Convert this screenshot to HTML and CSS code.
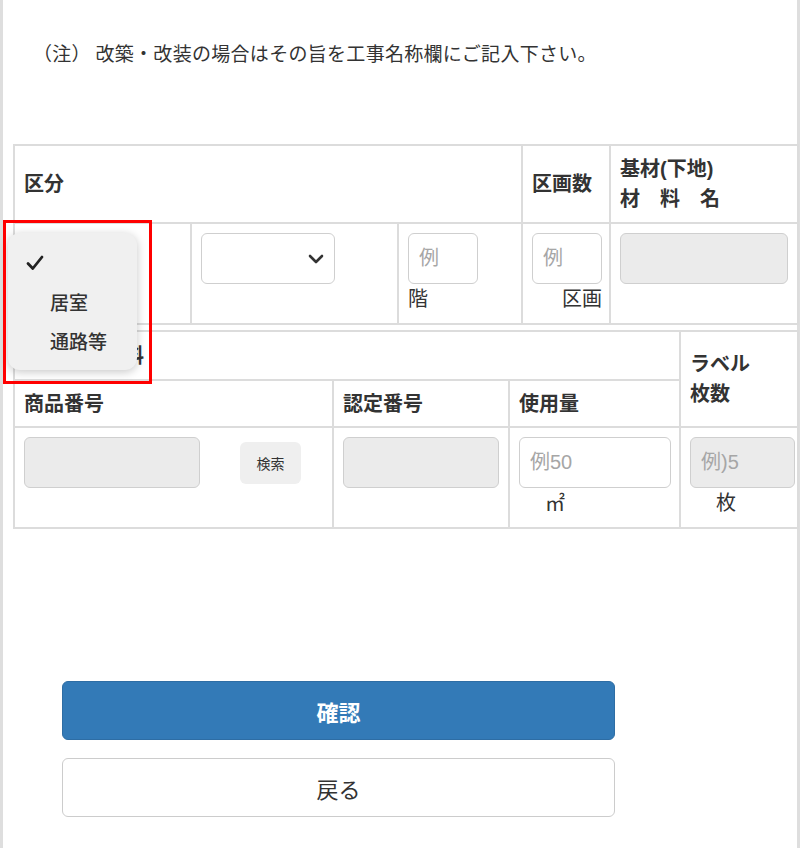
FILE: index.html
```html
<!DOCTYPE html>
<html lang="ja">

<head>
    <meta charset="UTF-8" />
    <meta name="viewport" content="width=device-width, initial-scale=1.0" />
    <title>区分選択</title>
    <link rel="stylesheet" href="styles.css">
</head>

<body>
    <div class="page">
        <p class="note">（注） 改築・改装の場合はその旨を工事名称欄にご記入下さい。</p>

        <!-- 区分 -->
        <table class="form-table first-table">
            <colgroup>
                <col style="width: 177px">
                <col style="width: 207px">
                <col style="width: 124px">
                <col style="width: 88px">
                <col style="width: 188px">
            </colgroup>
            <tr class="row-head">
                <th colspan="3">区分</th>
                <th>区画数</th>
                <th>基材(下地)<br>材　料　名</th>
            </tr>
            <tr class="row-input">
                <td>
                    <div class="select select-a is-focus"></div>
                </td>
                <td>
                    <div class="select select-b">
                        <svg width="16" height="10" viewBox="0 0 16 10">
                            <polyline points="2,2 8,8 14,2" fill="none" stroke="#333" stroke-width="2.6" stroke-linecap="round" stroke-linejoin="round" />
                        </svg>
                    </div>
                </td>
                <td>
                    <input class="field field-xs" type="text" placeholder="例">
                    <div class="unit">階</div>
                </td>
                <td>
                    <input class="field field-xs" type="text" placeholder="例">
                    <div class="unit unit-right">区画</div>
                </td>
                <td>
                    <input class="field field-full is-gray" type="text" readonly>
                </td>
            </tr>
        </table>

        <!-- 材料 -->
        <table class="form-table second-table">
            <colgroup>
                <col style="width: 319px">
                <col style="width: 176px">
                <col style="width: 171px">
                <col style="width: 118px">
            </colgroup>
            <tr class="row-title">
                <th colspan="3">内装仕上材料</th>
                <th rowspan="2">ラベル<br>枚数</th>
            </tr>
            <tr class="row-sub">
                <th>商品番号</th>
                <th>認定番号</th>
                <th>使用量</th>
            </tr>
            <tr class="row-values">
                <td>
                    <div class="search-box">
                        <input class="field field-product is-gray" type="text" readonly>
                        <button class="btn-search" type="button">検索</button>
                    </div>
                </td>
                <td>
                    <input class="field field-full is-gray" type="text" readonly>
                </td>
                <td>
                    <input class="field field-amount" type="text" placeholder="例50">
                    <div class="unit unit-indent unit-cjk">㎡</div>
                </td>
                <td>
                    <input class="field field-label is-gray" type="text" placeholder="例)5" readonly>
                    <div class="unit unit-indent">枚</div>
                </td>
            </tr>
        </table>

        <div class="actions">
            <button class="btn btn-primary" type="button">確認</button>
            <button class="btn btn-default" type="button">戻る</button>
        </div>

        <!-- 開いている選択肢 -->
        <div class="picker">
            <div class="picker-item">
                <span class="picker-check">
                    <svg width="18" height="16" viewBox="0 0 18 16">
                        <polyline points="2,8.5 6.8,13.5 16,2" fill="none" stroke="#222" stroke-width="2.8" stroke-linecap="round" stroke-linejoin="round" />
                    </svg>
                </span>
            </div>
            <div class="picker-item"><span class="picker-check"></span>居室</div>
            <div class="picker-item"><span class="picker-check"></span>通路等</div>
        </div>
        <div class="mark"></div>
    </div>
</body>

</html>
```

FILE: styles.css
```css
* {
    box-sizing: border-box;
}

body {
    margin: 0;
    background: #fff;
    color: #333;
    font-family: "Liberation Sans", "Noto Sans CJK JP", sans-serif;
}

.page {
    position: relative;
    width: 800px;
    height: 848px;
    padding: 38px 0 0 10px;
    border-left: 3px solid #dedede;
    border-right: 3px solid #dedede;
}

.note {
    margin: 0 0 0 20px;
    font-family: "Noto Sans CJK JP", sans-serif;
    font-size: 19px;
    line-height: 30px;
    letter-spacing: 0.3px;
    color: #333;
}

.form-table {
    width: 784px;
    table-layout: fixed;
    border-collapse: collapse;
}

.first-table {
    margin-top: 76px;
}

.second-table {
    margin-top: 5px;
}

.form-table th,
.form-table td {
    border: 2px solid #dcdcdc;
    padding: 9px;
    text-align: left;
    vertical-align: top;
}

.form-table th {
    padding-top: 6px;
    padding-bottom: 6px;
    font-size: 20px;
    font-weight: bold;
    line-height: 30px;
    vertical-align: middle;
    color: #333;
}

.row-head {
    height: 78px;
}

.row-input {
    height: 100px;
}

.row-title {
    height: 49px;
}

.row-sub {
    height: 47px;
}

.row-values {
    height: 100px;
}

.select {
    display: flex;
    align-items: center;
    justify-content: flex-end;
    height: 51px;
    padding-right: 10px;
    border: 1px solid #cfcfcf;
    border-radius: 6px;
    background: #fff;
}

.select-a {
    width: 87px;
}

.select-b {
    width: 134px;
}

.select.is-focus {
    border: 2px solid #6ea6dc;
}

.field {
    display: block;
    height: 51px;
    padding: 0 10px;
    border: 1px solid #cfcfcf;
    border-radius: 6px;
    background: #fff;
    font-family: "Liberation Sans", "Noto Sans CJK JP", sans-serif;
    font-size: 20px;
    color: #333;
    outline: none;
}

.field::placeholder {
    color: #a6a6a6;
}

.field.is-gray {
    background: #ebebeb;
}

.field-xs {
    width: 70px;
}

.field-full {
    width: 100%;
}

.field-product {
    width: 176px;
}

.field-amount {
    width: 152px;
}

.field-label {
    width: 105px;
}

.unit {
    font-size: 20px;
    line-height: 30px;
    color: #333;
}

.unit-right {
    width: 70px;
    text-align: right;
}

.unit-indent {
    padding-left: 26px;
}

.unit-cjk {
    font-family: "Noto Sans CJK JP", sans-serif;
}

.search-box {
    display: flex;
    align-items: center;
}

.btn-search {
    width: 61px;
    height: 42px;
    margin-left: 40px;
    border: none;
    border-radius: 6px;
    background: #efefef;
    font-family: "Noto Sans CJK JP", sans-serif;
    font-size: 14px;
    color: #333;
}

.actions {
    display: flex;
    flex-direction: column;
    gap: 18px;
    width: 553px;
    margin: 152px 0 0 49px;
}

.btn {
    height: 59px;
    border-radius: 6px;
    font-family: "Noto Sans CJK JP", sans-serif;
    font-size: 22px;
}

.btn-primary {
    border: 1px solid #2e6da4;
    background: #337ab7;
    color: #fff;
    font-weight: bold;
}

.btn-default {
    border: 1px solid #cccccc;
    background: #fff;
    color: #333;
}

/* 開いた選択肢 */
.picker {
    position: absolute;
    top: 233px;
    left: 5px;
    width: 129px;
    height: 137px;
    padding: 10px 0;
    border-radius: 12px;
    background: #f0f0f0;
    box-shadow: 0 2px 10px rgba(0, 0, 0, 0.22);
}

.picker-item {
    display: flex;
    align-items: center;
    height: 39px;
    padding-left: 18px;
    font-family: "Noto Sans CJK JP", sans-serif;
    font-size: 19px;
    font-weight: 500;
    color: #333;
}

.picker-check {
    display: inline-flex;
    width: 24px;
}

.mark {
    position: absolute;
    top: 220px;
    left: 0;
    width: 149px;
    height: 164px;
    border: 3px solid #f00;
}
```
